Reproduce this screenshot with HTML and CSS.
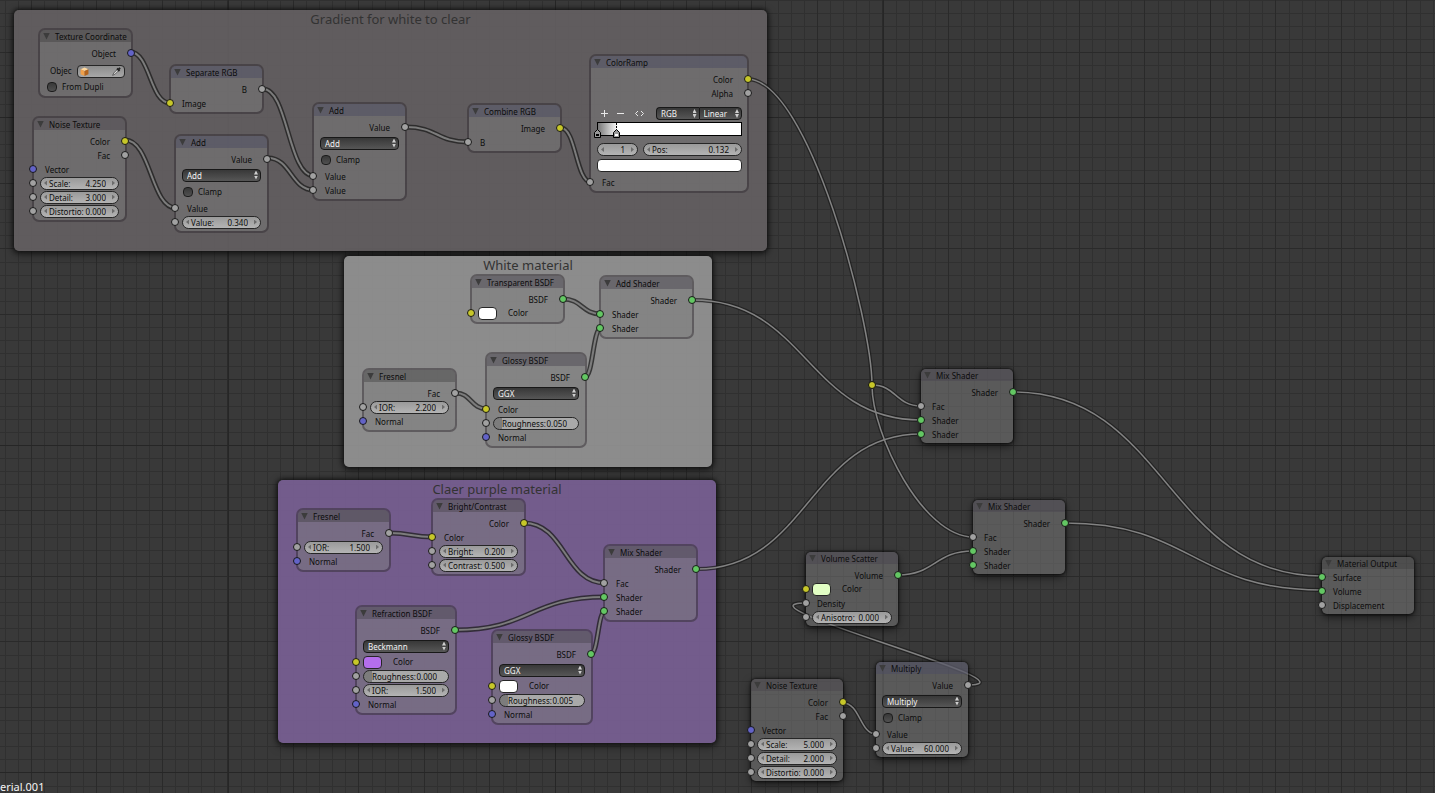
FILE: index.html
```html
<!DOCTYPE html>
<html lang="en">
<head>
<meta charset="utf-8">
<title>Node Editor</title>
<link rel="stylesheet" href="styles.css">
</head>
<body>
<main class="editor">
  <svg class="layer" aria-hidden="true">
    <defs>
      <pattern id="grid" x="31" y="52" width="131" height="131" patternUnits="userSpaceOnUse">
        <path class="minor" d="M13 0V131M26 0V131M39 0V131M52 0V131M79 0V131M92 0V131M105 0V131M118 0V131M0 13H131M0 26H131M0 39H131M0 52H131M0 79H131M0 92H131M0 105H131M0 118H131"/>
        <path class="major" d="M0 0H1V131H0ZM65 0H66V131H65ZM0 0H131V1H0ZM0 65H131V66H0Z"/>
      </pattern>
      <pattern id="coarse" x="228" y="117" width="655" height="655" patternUnits="userSpaceOnUse">
        <path class="coarse" d="M0 0H1V655H0ZM327 0H328V655H327ZM0 0H655V1H0ZM0 328H655V329H0Z"/>
      </pattern>
    </defs>
    <rect width="100%" height="100%" fill="url(#grid)"/>
    <rect width="100%" height="100%" fill="url(#coarse)"/>
  </svg>

  <section class="frame f-gradient"><h2>Gradient for white to clear</h2></section>
  <section class="frame f-white"><h2>White material</h2></section>
  <section class="frame f-purple"><h2>Claer purple material</h2></section>

  <svg class="layer" aria-hidden="true">
    <defs>
      <g id="links-in">
        <path d="M130 52C150 52 150 103 170 103"/>
        <path d="M125 140C151 140 151 208 176 208"/>
        <path d="M263 89C288 89 288 176 314 176"/>
        <path d="M268 158C291 158 291 190 314 190"/>
        <path d="M406 127C437 127 437 142 468 142"/>
        <path d="M561 128C576 128 576 182 591 182"/>
        <path d="M563 299C582 299 582 314 601 314"/>
        <path d="M585 377C593 377 593 328 601 328"/>
        <path d="M456 393C471 393 471 409 487 409"/>
        <path d="M390 533C411 533 411 537 433 537"/>
        <path d="M524 523C565 523 565 583 605 583"/>
        <path d="M455 630C530 630 530 597 605 597"/>
        <path d="M591 654C598 654 598 611 605 611"/>
      </g>
      <g id="links-out">
        <path d="M747 79C809 79 872 323 872 385"/>
        <path d="M872 385C896 385 896 406 921 406"/>
        <path d="M872 385C872 435 923 537 973 537"/>
        <path d="M693 300C807 300 807 420 921 420"/>
        <path d="M697 569C809 569 809 434 921 434"/>
        <path d="M1013 392C1167 392 1167 576 1322 576"/>
        <path d="M1065 523C1193 523 1193 590 1322 590"/>
        <path d="M898 575C935 575 935 551 973 551"/>
        <path d="M843 703C860 703 860 734 876 734"/>
        <path d="M967 685C1047 685 726 603 806 603"/>
      </g>
    </defs>
    <use href="#links-in" class="edge thick"/>
    <use href="#links-in" class="core thick"/>
    <use href="#links-out" class="edge"/>
    <use href="#links-out" class="core"/>
    <circle class="reroute" cx="872" cy="385" r="3.500"/>
  </svg>

  <article class="node framed n-texcoord input">
    <header><button class="fold" aria-label="Collapse"></button><h3>Texture Coordinate</h3></header>
    <div class="body">
      <div class="row out">Object<i class="sock blue"></i></div>
      <div class="row pick">
        <label for="obj">Objec</label>
        <span class="picker">
          <svg class="cube" viewBox="0 0 16 16" aria-hidden="true"><path d="M1 4 8 1 15 4 8 7Z" fill="#ffd9a0"/><path d="M1 4 8 7V16L1 13Z" fill="#f0a04a"/><path d="M15 4 8 7V16L15 13Z" fill="#b4641c"/></svg>
          <input id="obj" type="text" value="">
          <svg class="dropper" viewBox="0 0 16 16" aria-hidden="true"><path d="M9 5 3 11 1 15 5 13 11 7" fill="#ddd" stroke="#444" stroke-width="1.200"/><path d="M8 4 12 8M10 6 13 3" stroke="#222" stroke-width="3"/></svg>
        </span>
      </div>
      <label class="row check"><input type="checkbox">From Dupli</label>
    </div>
  </article>

  <article class="node framed n-noise1 texture">
    <header><button class="fold" aria-label="Collapse"></button><h3>Noise Texture</h3></header>
    <div class="body">
      <div class="row out">Color<i class="sock yellow"></i></div>
      <div class="row out">Fac<i class="sock"></i></div>
      <div class="row in">Vector<i class="sock blue"></i></div>
      <div class="row"><i class="sock left"></i><label class="num">Scale:<input type="text" value="4.250"></label></div>
      <div class="row"><i class="sock left"></i><label class="num">Detail:<input type="text" value="3.000"></label></div>
      <div class="row"><i class="sock left"></i><label class="num">Distortio:<input type="text" value="0.000"></label></div>
    </div>
  </article>

  <article class="node framed n-separate convert">
    <header><button class="fold" aria-label="Collapse"></button><h3>Separate RGB</h3></header>
    <div class="body">
      <div class="row out">B<i class="sock"></i></div>
      <div class="row in">Image<i class="sock yellow"></i></div>
    </div>
  </article>

  <article class="node framed n-add1 convert">
    <header><button class="fold" aria-label="Collapse"></button><h3>Add</h3></header>
    <div class="body">
      <div class="row out">Value<i class="sock"></i></div>
      <div class="row menu"><span class="drop"><select aria-label="Operation"><option>Add</option></select></span></div>
      <label class="row check clamp"><input type="checkbox">Clamp</label>
      <div class="row in">Value<i class="sock"></i></div>
      <div class="row"><i class="sock left"></i><label class="num">Value:<input type="text" value="0.340"></label></div>
    </div>
  </article>

  <article class="node framed n-add2 convert">
    <header><button class="fold" aria-label="Collapse"></button><h3>Add</h3></header>
    <div class="body">
      <div class="row out">Value<i class="sock"></i></div>
      <div class="row menu"><span class="drop"><select aria-label="Operation"><option>Add</option></select></span></div>
      <label class="row check clamp"><input type="checkbox">Clamp</label>
      <div class="row in">Value<i class="sock"></i></div>
      <div class="row in">Value<i class="sock"></i></div>
    </div>
  </article>

  <article class="node framed n-combine convert">
    <header><button class="fold" aria-label="Collapse"></button><h3>Combine RGB</h3></header>
    <div class="body">
      <div class="row out">Image<i class="sock yellow"></i></div>
      <div class="row in">B<i class="sock"></i></div>
    </div>
  </article>

  <article class="node framed n-ramp convert">
    <header><button class="fold" aria-label="Collapse"></button><h3>ColorRamp</h3></header>
    <div class="body">
      <div class="row out">Color<i class="sock yellow"></i></div>
      <div class="row out">Alpha<i class="sock"></i></div>
      <div class="tools">
        <button class="tool" aria-label="Add stop"><svg viewBox="0 0 9 9"><path d="M4.500 1V8M1 4.500H8"/></svg></button>
        <button class="tool" aria-label="Remove stop"><svg viewBox="0 0 9 9"><path d="M1 4.500H8"/></svg></button>
        <button class="tool" aria-label="Flip"><svg viewBox="0 0 9 9"><path d="M3 2 0.500 4.500 3 7M6 2 8.500 4.500 6 7"/></svg></button>
        <span class="pair">
          <span class="drop"><select aria-label="Color mode"><option>RGB</option></select></span>
          <span class="drop"><select aria-label="Interpolation"><option>Linear</option></select></span>
        </span>
      </div>
      <div class="ramp">
        <svg class="stop first" viewBox="0 0 7 9"><path d="M.5 8.500V3.500L3.500 .5 6.500 3.500V8.500Z" fill="#999" stroke="#000"/><path d="M2 5H5V7H2Z" fill="#000"/></svg>
        <svg class="stop second" viewBox="0 0 7 15"><path d="M3.500 0V7" stroke="#000" stroke-dasharray="2 1"/><path d="M.5 14.500V9.500L3.500 6.500 6.500 9.500V14.500Z" fill="#999" stroke="#000"/><path d="M2 11H5V13H2Z" fill="#fff"/></svg>
      </div>
      <div class="fields">
        <label class="num index"><input type="text" value="1" aria-label="Stop"></label>
        <label class="num pos">Pos:<input type="text" value="0.132"></label>
      </div>
      <button class="swatch wide" aria-label="Stop color"></button>
      <div class="row in">Fac<i class="sock"></i></div>
    </div>
  </article>

  <article class="node framed n-transparent shader">
    <header><button class="fold" aria-label="Collapse"></button><h3>Transparent BSDF</h3></header>
    <div class="body">
      <div class="row out">BSDF<i class="sock green"></i></div>
      <div class="row color"><i class="sock yellow left"></i><button class="swatch" aria-label="Color"></button>Color</div>
    </div>
  </article>

  <article class="node framed n-addshader shader">
    <header><button class="fold" aria-label="Collapse"></button><h3>Add Shader</h3></header>
    <div class="body">
      <div class="row out">Shader<i class="sock green"></i></div>
      <div class="row in">Shader<i class="sock green"></i></div>
      <div class="row in">Shader<i class="sock green"></i></div>
    </div>
  </article>

  <article class="node framed n-fresnel1 input">
    <header><button class="fold" aria-label="Collapse"></button><h3>Fresnel</h3></header>
    <div class="body">
      <div class="row out">Fac<i class="sock"></i></div>
      <div class="row"><i class="sock left"></i><label class="num">IOR:<input type="text" value="2.200"></label></div>
      <div class="row in">Normal<i class="sock blue"></i></div>
    </div>
  </article>

  <article class="node framed n-glossy1 shader">
    <header><button class="fold" aria-label="Collapse"></button><h3>Glossy BSDF</h3></header>
    <div class="body">
      <div class="row out">BSDF<i class="sock green"></i></div>
      <div class="row menu"><span class="drop"><select aria-label="Distribution"><option>GGX</option></select></span></div>
      <div class="row in">Color<i class="sock yellow"></i></div>
      <div class="row"><i class="sock left"></i><label class="num slider">Roughness:<input type="text" value="0.050"></label></div>
      <div class="row in">Normal<i class="sock blue"></i></div>
    </div>
  </article>

  <article class="node framed n-fresnel2 input">
    <header><button class="fold" aria-label="Collapse"></button><h3>Fresnel</h3></header>
    <div class="body">
      <div class="row out">Fac<i class="sock"></i></div>
      <div class="row"><i class="sock left"></i><label class="num">IOR:<input type="text" value="1.500"></label></div>
      <div class="row in">Normal<i class="sock blue"></i></div>
    </div>
  </article>

  <article class="node framed n-bright texture">
    <header><button class="fold" aria-label="Collapse"></button><h3>Bright/Contrast</h3></header>
    <div class="body">
      <div class="row out">Color<i class="sock yellow"></i></div>
      <div class="row in">Color<i class="sock yellow"></i></div>
      <div class="row"><i class="sock left"></i><label class="num">Bright:<input type="text" value="0.200"></label></div>
      <div class="row"><i class="sock left"></i><label class="num">Contrast:<input type="text" value="0.500"></label></div>
    </div>
  </article>

  <article class="node framed n-mix0 shader">
    <header><button class="fold" aria-label="Collapse"></button><h3>Mix Shader</h3></header>
    <div class="body">
      <div class="row out">Shader<i class="sock green"></i></div>
      <div class="row in">Fac<i class="sock"></i></div>
      <div class="row in">Shader<i class="sock green"></i></div>
      <div class="row in">Shader<i class="sock green"></i></div>
    </div>
  </article>

  <article class="node framed n-refraction shader">
    <header><button class="fold" aria-label="Collapse"></button><h3>Refraction BSDF</h3></header>
    <div class="body">
      <div class="row out">BSDF<i class="sock green"></i></div>
      <div class="row menu"><span class="drop"><select aria-label="Distribution"><option>Beckmann</option></select></span></div>
      <div class="row color"><i class="sock yellow left"></i><button class="swatch violet" aria-label="Color"></button>Color</div>
      <div class="row"><i class="sock left"></i><label class="num slider">Roughness:<input type="text" value="0.000"></label></div>
      <div class="row"><i class="sock left"></i><label class="num">IOR:<input type="text" value="1.500"></label></div>
      <div class="row in">Normal<i class="sock blue"></i></div>
    </div>
  </article>

  <article class="node framed n-glossy2 shader">
    <header><button class="fold" aria-label="Collapse"></button><h3>Glossy BSDF</h3></header>
    <div class="body">
      <div class="row out">BSDF<i class="sock green"></i></div>
      <div class="row menu"><span class="drop"><select aria-label="Distribution"><option>GGX</option></select></span></div>
      <div class="row color"><i class="sock yellow left"></i><button class="swatch" aria-label="Color"></button>Color</div>
      <div class="row"><i class="sock left"></i><label class="num slider">Roughness:<input type="text" value="0.005"></label></div>
      <div class="row in">Normal<i class="sock blue"></i></div>
    </div>
  </article>

  <article class="node n-mix1 shader">
    <header><button class="fold" aria-label="Collapse"></button><h3>Mix Shader</h3></header>
    <div class="body">
      <div class="row out">Shader<i class="sock green"></i></div>
      <div class="row in">Fac<i class="sock"></i></div>
      <div class="row in">Shader<i class="sock green"></i></div>
      <div class="row in">Shader<i class="sock green"></i></div>
    </div>
  </article>

  <article class="node n-mix2 shader">
    <header><button class="fold" aria-label="Collapse"></button><h3>Mix Shader</h3></header>
    <div class="body">
      <div class="row out">Shader<i class="sock green"></i></div>
      <div class="row in">Fac<i class="sock"></i></div>
      <div class="row in">Shader<i class="sock green"></i></div>
      <div class="row in">Shader<i class="sock green"></i></div>
    </div>
  </article>

  <article class="node n-scatter shader">
    <header><button class="fold" aria-label="Collapse"></button><h3>Volume Scatter</h3></header>
    <div class="body">
      <div class="row out">Volume<i class="sock green"></i></div>
      <div class="row color"><i class="sock yellow left"></i><button class="swatch lime" aria-label="Color"></button>Color</div>
      <div class="row in">Density<i class="sock"></i></div>
      <div class="row"><i class="sock left"></i><label class="num">Anisotro:<input type="text" value="0.000"></label></div>
    </div>
  </article>

  <article class="node n-noise2 texture">
    <header><button class="fold" aria-label="Collapse"></button><h3>Noise Texture</h3></header>
    <div class="body">
      <div class="row out">Color<i class="sock yellow"></i></div>
      <div class="row out">Fac<i class="sock"></i></div>
      <div class="row in">Vector<i class="sock blue"></i></div>
      <div class="row"><i class="sock left"></i><label class="num">Scale:<input type="text" value="5.000"></label></div>
      <div class="row"><i class="sock left"></i><label class="num">Detail:<input type="text" value="2.000"></label></div>
      <div class="row"><i class="sock left"></i><label class="num">Distortio:<input type="text" value="0.000"></label></div>
    </div>
  </article>

  <article class="node n-multiply convert">
    <header><button class="fold" aria-label="Collapse"></button><h3>Multiply</h3></header>
    <div class="body">
      <div class="row out">Value<i class="sock"></i></div>
      <div class="row menu"><span class="drop"><select aria-label="Operation"><option>Multiply</option></select></span></div>
      <label class="row check clamp"><input type="checkbox">Clamp</label>
      <div class="row in">Value<i class="sock"></i></div>
      <div class="row"><i class="sock left"></i><label class="num">Value:<input type="text" value="60.000"></label></div>
    </div>
  </article>

  <article class="node n-output input">
    <header><button class="fold" aria-label="Collapse"></button><h3>Material Output</h3></header>
    <div class="body tight">
      <div class="row in">Surface<i class="sock green"></i></div>
      <div class="row in">Volume<i class="sock green"></i></div>
      <div class="row in">Displacement<i class="sock"></i></div>
    </div>
  </article>

  <p class="datablock">erial.001</p>
</main>
</body>
</html>
```

FILE: styles.css
```css
* { box-sizing: border-box; }

body {
  margin: 0;
  background: #393939;
  color: #0c0c0c;
  font: 8px/14px "Noto Sans", "Open Sans", sans-serif;
}

h2, h3, p { margin: 0; font-weight: 400; }

button, input, select {
  margin: 0;
  padding: 0;
  border: 0;
  background: none;
  color: inherit;
  font: inherit;
  appearance: none;
  min-width: 0;
}

.editor {
  position: relative;
  height: 100vh;
  overflow: hidden;
}

.layer {
  position: absolute;
  inset: 0;
  width: 100%;
  height: 100%;
}

/* grid */
.minor { fill: none; stroke: #303030; stroke-width: 1; transform: translate(0.5px, 0.5px); }
.major { fill: #2a2a2a; }
.coarse { fill: #262626; }

/* links */
.edge { fill: none; stroke: #1c1c1c; stroke-opacity: .75; stroke-width: 4; }
.core { fill: none; stroke: #828282; stroke-width: 1.5; }
.edge.thick { stroke-width: 5; }
.core.thick { stroke: #7c7c7c; stroke-width: 2; }
.reroute { fill: #c8c729; stroke: #111; }

/* frames */
.frame {
  position: absolute;
  border-radius: 5px;
  box-shadow: 0 0 4px 1px #111, 0 3px 10px rgba(0, 0, 0, .5);
}
.frame h2 {
  color: #333;
  font-size: 13px;
  line-height: 19px;
  text-align: center;
}
.f-gradient { left: 14px; top: 10px; width: 753px; height: 241px; background: rgba(101, 96, 99, .9); }
.f-white { left: 344px; top: 256px; width: 368px; height: 211px; background: rgba(150, 150, 150, .9); }
.f-purple { left: 278px; top: 480px; width: 438px; height: 263px; background: rgba(122, 97, 150, .9); }

/* nodes */
.node {
  --sock: -10px;
  position: absolute;
  width: 92px;
  border-radius: 5px;
  background: rgba(123, 123, 123, .5);
  background-clip: padding-box;
  box-shadow: 0 0 2px 1px rgba(0, 0, 0, .5), 0 3px 8px rgba(0, 0, 0, .6);
}
.node.framed {
  --sock: -11px;
  width: 95px;
  border: 2px solid rgba(50, 44, 50, .5);
  border-radius: 7px;
  box-shadow: none;
}
.node header {
  display: flex;
  align-items: center;
  gap: 5px;
  height: 12px;
  padding-left: 3px;
  border-radius: 5px 5px 0 0;
  white-space: nowrap;
}
.node h3 { font-size: 8px; line-height: 12px; padding-top: 2px; }
.input header { background: rgba(60, 60, 60, .4); }
.texture header { background: rgba(70, 66, 72, .4); }
.convert header { background: rgba(76, 76, 98, .5); }
.shader header { background: rgba(74, 68, 80, .45); }

.fold {
  width: 7px;
  height: 7px;
  background: #3c3c3c;
  clip-path: polygon(0 0, 100% 0, 50% 100%);
}

.body {
  display: flex;
  flex-direction: column;
  padding: 4px 6px 2px;
}
.body.tight { padding-top: 1px; }

.row {
  position: relative;
  display: flex;
  align-items: center;
  height: 14px;
  white-space: nowrap;
}
.out { justify-content: flex-end; padding-top: 2px; padding-right: 9px; }
.in { padding-top: 2px; padding-left: 5px; }
.menu { height: 18px; }
.check { gap: 5px; }
.clamp { height: 16px; margin-bottom: 1px; padding-left: 1px; }
.color { gap: 11px; }

.sock {
  position: absolute;
  top: 3px;
  right: -10px;
  width: 8px;
  height: 8px;
  border: 1px solid #191919;
  border-radius: 50%;
  background: #a1a1a1;
}
.in .sock, .sock.left { right: auto; left: var(--sock); }
.sock.blue { background: #6363c7; }
.sock.yellow { background: #c7c729; }
.sock.green { background: #63c763; }

/* number fields */
.num {
  position: relative;
  display: flex;
  flex: 1;
  align-items: center;
  min-width: 0;
  height: 13px;
  padding: 0 12px 0 8px;
  border: 1px solid #262626;
  border-radius: 7px;
  background: linear-gradient(#9a9a9a, #b4b4b4);
  line-height: 11px;
}
.num input { flex: 1; width: 0; height: 11px; text-align: right; }
.num::before, .num::after {
  content: "";
  position: absolute;
  top: 3px;
  width: 3px;
  height: 5px;
  background: #6c6c6c;
}
.num::before { left: 3px; clip-path: polygon(100% 0, 100% 100%, 0 50%); }
.num::after { right: 3px; clip-path: polygon(0 0, 100% 50%, 0 100%); }
.num.slider { padding: 0 11px 0 8px; background: linear-gradient(90deg, #7c7c7c 8px, #a9a9a9 8px); }
.num.slider::before, .num.slider::after { display: none; }

/* menus */
.drop {
  position: relative;
  display: flex;
  flex: 1;
  height: 13px;
  border: 1px solid #181818;
  border-radius: 4px;
  background: linear-gradient(#383838, #565656);
  color: #f2f2f2;
}
.drop select { flex: 1; height: 11px; padding-left: 4px; line-height: 11px; }
.drop::before, .drop::after {
  content: "";
  position: absolute;
  right: 2px;
  width: 4px;
  height: 4px;
  background: #cfcfcf;
  pointer-events: none;
}
.drop::before { top: 1px; clip-path: polygon(50% 0, 100% 100%, 0 100%); }
.drop::after { top: 6px; clip-path: polygon(0 0, 100% 0, 50% 100%); }

.check input {
  width: 10px;
  height: 10px;
  border: 1px solid #1c1c1c;
  border-radius: 4px;
  background: linear-gradient(#383838, #505050);
}

.swatch {
  width: 19px;
  height: 13px;
  border: 1px solid #262626;
  border-radius: 4px;
  background: #fff;
}
.violet { background: #b46eec; }
.lime { background: #e2ffc4; }

/* texture coordinate */
.n-texcoord .body { padding-left: 7px; }
.pick { gap: 5px; margin: 4px 0 2px; padding-left: 3px; }
.picker {
  display: flex;
  flex: 1;
  align-items: center;
  height: 13px;
  padding: 0 2px;
  border: 1px solid #262626;
  border-radius: 4px;
  background: linear-gradient(#8c8c8c, #a8a8a8);
}
.picker input { flex: 1; width: 0; height: 11px; }
.cube { width: 9px; height: 9px; }
.dropper { width: 10px; height: 10px; }

/* color ramp */
.n-ramp .body { padding-right: 5px; }
.tools { display: flex; align-items: center; gap: 7px; margin: 7px 0 2px; padding-left: 3px; }
.tool { display: flex; width: 9px; height: 9px; }
.tool:nth-child(3) { margin-left: 3px; }
.tool svg { width: 100%; height: 100%; fill: none; stroke: #e8e8e8; stroke-width: 1; }
.pair { display: flex; flex: 1; margin-left: 5px; }
.pair .drop:first-child { border-radius: 4px 0 0 4px; border-right: 0; }
.pair .drop:last-child { border-radius: 0 4px 4px 0; }
.ramp {
  position: relative;
  height: 14px;
  border: 1px solid #000;
  background: linear-gradient(90deg, #777, #fff 20px);
}
.stop { position: absolute; width: 7px; }
.first { left: -4px; top: 6px; height: 9px; }
.second { left: 15px; top: 0; height: 15px; }
.fields { display: flex; gap: 5px; margin: 7px 0 3px; }
.num.index { flex: 0 0 41px; }
.wide { width: 100%; margin-bottom: 3px; }

/* canvas placement */
.n-texcoord { left: 38px; top: 28px; }
.n-noise1 { left: 32px; top: 116px; }
.n-separate { left: 169px; top: 64px; }
.n-add1 { left: 174px; top: 134px; }
.n-add2 { left: 312px; top: 102px; }
.n-combine { left: 467px; top: 103px; }
.node.n-ramp { left: 589px; top: 54px; width: 160px; }
.n-transparent { left: 470px; top: 274px; }
.n-addshader { left: 599px; top: 275px; }
.n-fresnel1 { left: 362px; top: 368px; }
.node.n-glossy1 { left: 485px; top: 352px; width: 102px; }
.n-fresnel2 { left: 296px; top: 508px; }
.n-bright { left: 431px; top: 498px; }
.n-mix0 { left: 603px; top: 544px; }
.node.n-refraction { left: 355px; top: 605px; width: 102px; }
.node.n-glossy2 { left: 491px; top: 629px; width: 102px; }
.n-mix1 { left: 921px; top: 369px; }
.n-mix2 { left: 973px; top: 500px; }
.n-scatter { left: 806px; top: 552px; }
.n-noise2 { left: 751px; top: 679px; }
.n-multiply { left: 876px; top: 662px; }
.n-output { left: 1322px; top: 557px; }

.datablock {
  position: absolute;
  left: 0;
  bottom: 0;
  color: #f4f4f4;
  font-size: 11px;
  line-height: 13px;
}
```
